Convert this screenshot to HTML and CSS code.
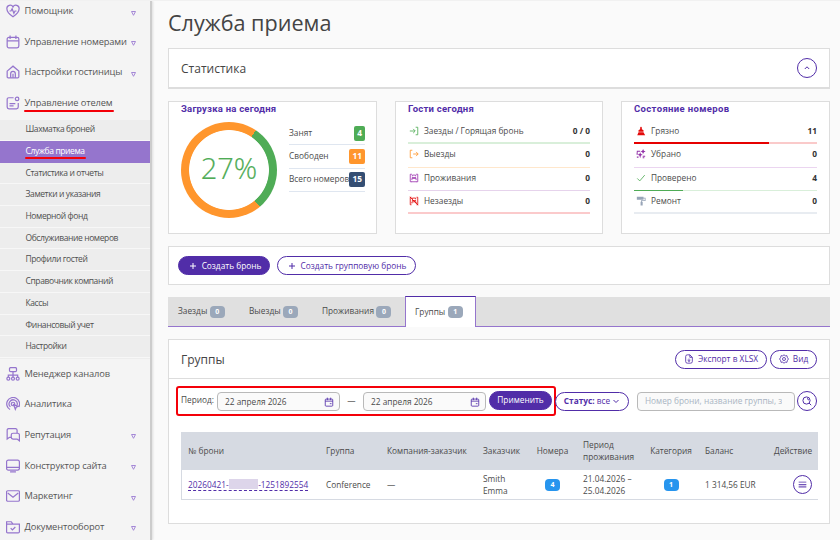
FILE: index.html
```html
<!DOCTYPE html>
<html lang="ru">
<head>
<meta charset="utf-8">
<title>Служба приема</title>
<link rel="stylesheet" href="styles.css">
</head>
<body>
<div class="app">
<aside class="sidebar">
  <nav class="menu">
    <div class="menu-item"><svg class="mi" viewBox="0 0 24 24"><path d="M12 22C5 17 1.500 13 1.500 8A5.600 5.600 0 0 1 12 5a5.600 5.600 0 0 1 10.500 3C22.500 13 19 17 12 22z"/><path d="M6 12h2.500l2-4 3 8 2-4H18"/></svg><span class="label">Помощник</span><svg class="caret" viewBox="0 0 5 5"><path d="M.500.500h4L2.500 4.300z"/></svg></div>
    <div class="menu-item"><svg class="mi" viewBox="0 0 24 24"><rect x="2" y="4" width="20" height="18" rx="3"/><path d="M2 10h20M7 1v6M17 1v6"/></svg><span class="label">Управление номерами</span><svg class="caret" viewBox="0 0 5 5"><path d="M.500.500h4L2.500 4.300z"/></svg></div>
    <div class="menu-item"><svg class="mi" viewBox="0 0 24 24"><path d="M2 10.500 12 2l10 8.500V20q0 2-2 2H4q-2 0-2-2z"/><path d="M8 22v-7q0-4 4-4t4 4v7M12 15v7"/></svg><span class="label">Настройки гостиницы</span><svg class="caret" viewBox="0 0 5 5"><path d="M.500.500h4L2.500 4.300z"/></svg></div>
    <div class="menu-item"><svg class="mi" viewBox="0 0 24 24"><path d="M13 3H5Q2 3 2 6v13q0 3 3 3h13q3 0 3-3v-7M6 13h10M6 17h7"/><circle cx="19" cy="5" r="3"/></svg><span class="label marked">Управление отелем</span></div>
  </nav>
  <nav class="submenu">
    <div class="sub">Шахматка броней</div>
    <div class="sub active"><span class="marked">Служба приема</span></div>
    <div class="sub">Статистика и отчеты</div>
    <div class="sub">Заметки и указания</div>
    <div class="sub">Номерной фонд</div>
    <div class="sub">Обслуживание номеров</div>
    <div class="sub">Профили гостей</div>
    <div class="sub">Справочник компаний</div>
    <div class="sub">Кассы</div>
    <div class="sub">Финансовый учет</div>
    <div class="sub">Настройки</div>
  </nav>
  <nav class="menu">
    <div class="menu-item"><svg class="mi" viewBox="0 0 24 24"><rect x="6" y="1" width="12" height="7" rx="2"/><path d="M12 8v9M4 17v-3h16v3"/><circle cx="4" cy="20" r="2.500"/><circle cx="12" cy="20" r="2.500"/><circle cx="20" cy="20" r="2.500"/></svg><span class="label">Менеджер каналов</span></div>
    <div class="menu-item"><svg class="mi" viewBox="0 0 24 24"><path d="M7 21.500A11 11 0 1 1 22 17M7.500 17a7 7 0 1 1 11.500-3"/><circle cx="12" cy="12" r="3"/><path d="m13 13 3 8 1.500-3.500L21 16z"/></svg><span class="label">Аналитика</span></div>
    <div class="menu-item"><svg class="mi" viewBox="0 0 24 24"><path d="M9 16H6l-4 3V4q0-3 3-3h11q3 0 3 3v5"/><path d="M12 9h8q3 0 3 3v10l-4-3h-7q-3 0-3-3v-4q0-3 3-3z"/></svg><span class="label">Репутация</span><svg class="caret" viewBox="0 0 5 5"><path d="M.500.500h4L2.500 4.300z"/></svg></div>
    <div class="menu-item"><svg class="mi" viewBox="0 0 24 24"><rect x="1" y="2" width="22" height="17" rx="3"/><path d="M1 14.500h22M7 22h10"/></svg><span class="label">Конструктор сайта</span><svg class="caret" viewBox="0 0 5 5"><path d="M.500.500h4L2.500 4.300z"/></svg></div>
    <div class="menu-item"><svg class="mi" viewBox="0 0 24 24"><rect x="1" y="3" width="22" height="18" rx="2"/><path d="m3 7 9 7 9-7"/></svg><span class="label">Маркетинг</span><svg class="caret" viewBox="0 0 5 5"><path d="M.500.500h4L2.500 4.300z"/></svg></div>
    <div class="menu-item"><svg class="mi" viewBox="0 0 24 24"><path d="M1 20V3h8l3 4h11v13q0 2-2 2H3q-2 0-2-2zM1 7h11"/><path d="m8 14 3 3 5-5"/></svg><span class="label">Документооборот</span><svg class="caret" viewBox="0 0 5 5"><path d="M.500.500h4L2.500 4.300z"/></svg></div>
  </nav>
</aside>

<main class="main">
  <h1>Служба приема</h1>
  <section class="box stat-head"><h2>Статистика</h2><button class="round"><svg viewBox="0 0 20 20"><path d="m7.800 11 2.200-2.200 2.200 2.200"/></svg></button></section>

  <section class="cards">
    <article class="box card">
      <h3>Загрузка на сегодня</h3>
      <div class="load">
        <div class="donut"><span>27%</span></div>
        <div class="load-list">
          <div><span>Занят</span><b class="tag green">4</b></div>
          <div><span>Свободен</span><b class="tag orange">11</b></div>
          <div><span>Всего номеров</span><b class="tag navy">15</b></div>
        </div>
      </div>
    </article>
    <article class="box card">
      <h3>Гости сегодня</h3>
      <div class="stats">
        <div class="stat s-green thick"><svg class="si c-green" viewBox="0 0 12 12"><path d="M1 6h6M5 3.500 7.500 6 5 8.500M8 1.500h2.500v9H8"/></svg><span>Заезды / Горящая бронь</span><b>0 / 0</b></div>
        <div class="stat s-orange"><svg class="si c-orange" viewBox="0 0 12 12"><path d="M5 6h6M8.500 3.500 11 6 8.500 8.500M4 1.500H1.500v9H4"/></svg><span>Выезды</span><b>0</b></div>
        <div class="stat s-purple"><svg class="si c-purple" viewBox="0 0 12 12"><path d="M3.500 1.500h-2v9h2M8.500 1.500h2v9h-2M3.500 5.500h5M3.500 8.500v-2h5v2M4 4V2.500h4V4M3 10.500h6"/></svg><span>Проживания</span><b>0</b></div>
        <div class="stat s-red thick"><svg class="si c-red" viewBox="0 0 12 12"><path d="M3 1.500H1.500v9H3M9 1.500h1.500v9H9M3.500 5.500h5M3.500 9V7h5v2M4 4V2.500h4V4M1 1l10 10"/></svg><span>Незаезды</span><b>0</b></div>
      </div>
    </article>
    <article class="box card">
      <h3 class="wide">Состояние номеров</h3>
      <div class="stats">
        <div class="stat s-dirty thick"><svg class="si f-red" viewBox="0 0 12 12"><path d="M6 1q1 0 1 1.500V4l2 1v2H3V5l2-1V2.500Q5 1 6 1zM3 7.500h6L11 11H1.500z"/></svg><span>Грязно</span><b>11</b></div>
        <div class="stat s-clean"><svg class="si f-purple" viewBox="0 0 12 12"><path d="M8.500 0l1 2 2 1-2 1-1 2-1-2-2-1 2-1zM5 4l.900 2.100L8 7l-2.100.900L5 11l-.900-3.100L2 7l2.100-.900zM1 2h4v1.200H2V5H.800zM8 8h3v1.200H8zM8 10h2v1H8zM.500 5.500h2v1h-2zM1 9h2v1.500H1z"/></svg><span>Убрано</span><b>0</b></div>
        <div class="stat s-check"><svg class="si c-green" viewBox="0 0 12 12"><path d="m1.500 6.500 3 3 6-7"/></svg><span>Проверено</span><b>4</b></div>
        <div class="stat s-repair thick"><svg class="si f-gray" viewBox="0 0 12 12"><path d="M1 1h8v1h2.500v4H7v1h1v4.500H5.500V7H6V5h4.500V3H9v1.500H1z"/></svg><span>Ремонт</span><b>0</b></div>
      </div>
    </article>
  </section>

  <section class="box actions">
    <button class="btn primary create"><svg class="bi" viewBox="0 0 10 10"><path d="M5 2v6M2 5h6"/></svg><span>Создать бронь</span></button>
    <button class="btn create-group"><svg class="bi" viewBox="0 0 10 10"><path d="M5 2v6M2 5h6"/></svg><span>Создать групповую бронь</span></button>
  </section>

  <section class="tabs">
    <div class="tab t1">Заезды<b>0</b></div>
    <div class="tab t2">Выезды<b>0</b></div>
    <div class="tab t3">Проживания<b>0</b></div>
    <div class="tab current">Группы<b>1</b></div>
  </section>

  <section class="box panel">
    <header class="panel-head"><h2>Группы</h2>
      <button class="btn export"><svg class="bi" viewBox="0 0 12 12"><path d="M2 3q0-2 2-2h3l3 3v5q0 2-2 2H4q-2 0-2-2zM7 1v3h3M6 5.500v3.500M4.300 7.400 6 9l1.700-1.600"/></svg><span>Экспорт в XLSX</span></button>
      <button class="btn view"><svg class="bi" viewBox="0 0 12 12"><path d="m6 .900 1.500 1.300 2-.2.500 2L11.300 6 10 8l-.500 2-2-.200L6 11.100 4.500 9.800l-2 .2L2 8 .700 6 2 4l.500-2 2 .200z"/><circle cx="6" cy="6" r="1.800"/></svg><span>Вид</span></button>
    </header>
    <div class="filters">
      <div class="period">
        <label>Период:</label>
        <div class="field date"><span>22 апреля 2026</span><svg class="cal" viewBox="0 0 12 12"><rect x="1.500" y="2.500" width="9" height="8.500" rx="1"/><path d="M1.500 5h9M4 .800v3M8 .800v3M7 8h2"/></svg></div>
        <em>—</em>
        <div class="field date"><span>22 апреля 2026</span><svg class="cal" viewBox="0 0 12 12"><rect x="1.500" y="2.500" width="9" height="8.500" rx="1"/><path d="M1.500 5h9M4 .800v3M8 .800v3M7 8h2"/></svg></div>
        <button class="btn primary apply">Применить</button>
      </div>
      <button class="btn status"><span><b>Статус:</b> все</span><svg class="chev" viewBox="0 0 8 8"><path d="m1.500 3 2.500 2.500L6.500 3"/></svg></button>
      <div class="field search"><span>Номер брони, название группы, заказчик</span></div>
      <button class="round"><svg viewBox="0 0 20 20"><circle cx="9.500" cy="9.500" r="3.600"/><path d="m12 12 2.200 2.200M10 7.500q1.500.300 1.500 1.800"/></svg></button>
    </div>
    <table>
      <colgroup><col class="w1"><col class="w2"><col class="w3"><col class="w4"><col class="w5"><col class="w6"><col class="w7"><col class="w8"><col class="w9"></colgroup>
      <thead><tr><th>№ брони</th><th>Группа</th><th>Компания-заказчик</th><th>Заказчик</th><th class="mid">Номера</th><th>Период<br>проживания</th><th class="mid">Категория</th><th>Баланс</th><th class="end">Действие</th></tr></thead>
      <tbody><tr><td><a class="num">20260421-<i class="mask"></i>-1251892554</a></td><td>Conference</td><td>—</td><td>Smith<br>Emma</td><td class="mid"><b class="count">4</b></td><td>21.04.2026 –<br>25.04.2026</td><td class="mid"><b class="count">1</b></td><td>1 314,56 EUR</td><td class="end"><button class="round small"><svg viewBox="0 0 20 20"><path class="soft" d="M6 9.500h8v4H6z"/><path class="thin" d="M6 7.500h8M6 10h8M6 12.500h8"/></svg></button></td></tr></tbody>
    </table>
  </section>
</main>
</div>
</body>
</html>
```
FILE: styles.css
```css
* { box-sizing: border-box; }
body { margin: 0; background: #fafafa; color: #4b4b4b; font: 8.3px/12px "Open Sans", "Noto Sans", sans-serif; }
h1, h2, h3 { margin: 0; font-weight: 400; white-space: nowrap; }
button { font: inherit; margin: 0; padding: 0; color: inherit; }
svg { fill: none; stroke: currentColor; flex: none; }
.app { display: flex; width: 840px; height: 540px; overflow: hidden; border-top: 1px solid #f1f1f1; }
.sidebar { width: 152px; flex: none; background: #f4f4f4; border-right: 2px solid #ccc; box-shadow: 1px 0 2px #ddd; }
.menu-item { display: flex; align-items: center; height: 30.600px; padding: 0 14px 0 6px; color: #555; font-size: 9.300px; letter-spacing: -.13px; white-space: nowrap; }
.menu:first-child { margin-top: -5.200px; height: 124.200px; }
.mi { width: 14px; height: 14px; margin-right: 4.500px; color: #9575cd; stroke-width: 2.100; }
.caret { width: 5px; height: 5px; margin: 4px 0 0 auto; color: #a487d6; stroke-width: 1; }
.marked { position: relative; }
.marked::after { content: ""; position: absolute; left: -1px; right: -1px; bottom: -3px; height: 2px; border-radius: 1px; background: #f40009; }
.submenu { background: #ededed; height: 238.500px; }
.sub { height: 21.700px; padding-left: 25.500px; font-size: 8.500px; letter-spacing: -.4px; line-height: 19px; border-bottom: 1px solid #f7f7f7; color: #505050; white-space: nowrap; }
.sub:first-child { height: 21px; line-height: 17.500px; }
.sub.active { background: #9575cd; color: #fff; line-height: 20px; border: 0; }
.sub.active + .sub { line-height: 20px; }
.main { width: 662px; margin-left: 16px; flex: none; }
h1 { height: 47px; line-height: 44px; font-size: 21.600px; color: #444; }
.box { background: #fff; border: 1px solid #ddd; }
h2 { font-size: 12px; color: #444; padding-top: 1px; }
.stat-head { display: flex; justify-content: space-between; align-items: center; height: 41px; padding: 0 12px; border-bottom-width: 2px; }
.round { display: block; width: 20px; height: 20px; border: 1px solid #512da8; border-radius: 50%; background: #fff; color: #512da8; flex: none; }
.round svg { display: block; margin: -1px; width: 20px; height: 20px; }
.soft { stroke: none; fill: #d5cbea; }
.thin { stroke-width: .800; }
.cards { display: grid; grid-template-columns: 209px 208px 209px; gap: 18px; margin-top: 12px; }
.card { height: 133px; padding: 0 12px; }
h3 { font: 700 9.500px/14px Roboto, sans-serif; letter-spacing: .22px; height: 14px; color: #512da8; }
h3.wide { letter-spacing: .36px; }
.load { display: flex; gap: 12px; padding-top: 6px; }
.donut { width: 96px; height: 96px; flex: none; border-radius: 50%; display: grid; place-items: center; background: radial-gradient(circle, #fff 39.500px, transparent 40.300px), conic-gradient(#ff962d 34deg, #4fac56 34deg 140deg, #ff962d 140deg); color: #4fac56; font-size: 29px; font-weight: 300; }
.donut span { -webkit-text-stroke: .2px #4fac56; margin-top: -4px; }
.load-list { width: 77px; padding-top: 0; }
.load-list div { display: flex; align-items: center; justify-content: space-between; height: 23.400px; border-bottom: 1px solid #dfe6f0; white-space: nowrap; }
.load-list span { margin-top: -1px; }
.tag { color: #fff; border-radius: 2px; height: 15px; line-height: 14px; font-weight: 700; min-width: 11px; text-align: center; }
.tag:not(.green) { min-width: 16px; }
.load-list div:nth-child(3) { letter-spacing: -.03px; }
.green { background: #4fac56; } .orange { background: #ff962d; } .navy { background: #344e73; }
.stats { padding-top: 5px; }
.stat { display: flex; align-items: center; height: 23.330px; border-bottom: 1px solid; padding-bottom: 2px; }
.stat.thick { border-bottom-width: 2px; padding-bottom: 1px; }
.stat b { margin-left: auto; color: #333; }
.si { width: 10px; height: 10px; margin: 0 5px 0 1px; }
.wide + .stats .si { margin: 0 5px 0 2px; }
.c-green { color: #4fac56; } .c-orange { color: #ff962d; } .c-purple { color: #9c35b0; } .c-red { color: #e30b0b; }
.f-red { fill: #e30b0b; stroke: none; } .f-purple { fill: #9230a8; stroke: none; } .f-gray { fill: #98a5b8; stroke: none; }
.s-green { border-color: #d9efda; } .s-orange { border-color: #ffe7cc; } .s-purple { border-color: #e6d3ec; } .s-red { border-color: #fbcacb; }
.s-dirty { border-image: linear-gradient(90deg, #e60000 73.300%, #facaca 73.300%) 1; }
.s-clean { border-color: #ebd5f0; }
.s-check { border-image: linear-gradient(90deg, #4fac56 27%, #d9efda 27%) 1; }
.s-repair { border-color: #e8ecf1; }
.actions { height: 39px; margin-top: 12px; padding: 9px; display: flex; gap: 7px; }
.btn { display: flex; align-items: center; justify-content: center; height: 19px; border: 1px solid #512da8; border-radius: 10px; background: #fff; color: #512da8; white-space: nowrap; flex: none; }
.btn.primary { background: #512da8; color: #fff; }
.bi { width: 10px; height: 10px; margin-right: 4px; }
.create { width: 92px; padding-left: 1px; } .create-group { width: 139px; }
.tabs { display: flex; height: 30px; margin-top: 12px; background: #e0e0e0; border-bottom: 1px solid #9575cd; }
.tab { display: flex; align-items: center; height: 28px; }
.tab b { width: 15px; height: 12px; margin: 1px 0 0 2.500px; border-radius: 4px; background: #9ba8ba; color: #fff; font-size: 7px; line-height: 12px; text-align: center; }
.t1 { width: 71px; padding-left: 10px; } .t2 { width: 73px; padding-left: 10px; } .t3 { width: 93px; padding-left: 10px; }
.tab.current { width: 71px; height: 31px; margin-top: -1px; padding: 0 0 1px 9px; background: #fff; border: 1px solid #9575cd; border-top-color: #512da8; border-bottom: 0; }
.panel { height: 185px; margin-top: 12px; }
.panel-head { display: flex; align-items: center; height: 39px; padding: 0 12px; border-bottom: 1px solid #ddd; gap: 3px; }
.panel-head h2 { margin-right: auto; padding-top: 2px; }
.export { width: 92px; } .view { width: 47px; }
.filters { display: flex; height: 30px; margin: 7px 12px 0 7px; align-items: center; }
.period { display: flex; align-items: center; flex: none; width: 380px; height: 30px; padding: 0 2px 0 3px; border: 2px solid #f40009; border-radius: 3px; }
.period label { width: 36px; margin-top: -3px; }
.period em { width: 23px; font-style: normal; text-align: center; }
.field { display: flex; align-items: center; height: 19px; border: 1px solid #b9b9b9; border-radius: 4px; background: #fafafa; padding: 0 5px 0 7px; white-space: nowrap; overflow: hidden; flex: none; }
.date { width: 123px; justify-content: space-between; padding-top: 1px; }
.cal { width: 10px; height: 10px; color: #512da8; }
.apply { width: 63px; margin: -2px 0 0 3px; }
.status { width: 74px; margin-left: -1px; }
.chev { width: 8px; height: 8px; margin-left: 2px; }
.search { width: 158px; margin: 0 2px 0 8px; color: #a9b4c2; padding-right: 12px; }
.search span { overflow: hidden; }
table { table-layout: fixed; width: 637px; margin: 16px 0 0 12px; border-collapse: separate; border-spacing: 0; border: 1px solid #d6dae2; border-top: 0; border-right: 0; }
th { height: 38px; padding: 0 6px; background: #d6dae2; text-align: left; font-weight: 400; }
td { height: 29px; padding: 0 6px; white-space: nowrap; }
.mid { text-align: center; } .end { text-align: right; }
.w1 { width: 138px; } .w2 { width: 61px; } .w3 { width: 96px; } .w4 { width: 51px; } .w5 { width: 49px; } .w6 { width: 66px; } .w7 { width: 56px; } .w8 { width: 69px; }
.num { color: #512da8; border-bottom: 1px dashed #512da8; }
.mask { display: inline-block; width: 29.500px; height: 10px; vertical-align: -1px; background: #ddd5ea; }
.count { display: inline-block; width: 15px; height: 12px; border-radius: 4px; background: #2795ee; color: #fff; font-size: 7px; line-height: 12px; text-align: center; }
.round.small { width: 19px; height: 19px; margin-left: auto; }
.round.small svg { width: 19px; height: 19px; }
```
